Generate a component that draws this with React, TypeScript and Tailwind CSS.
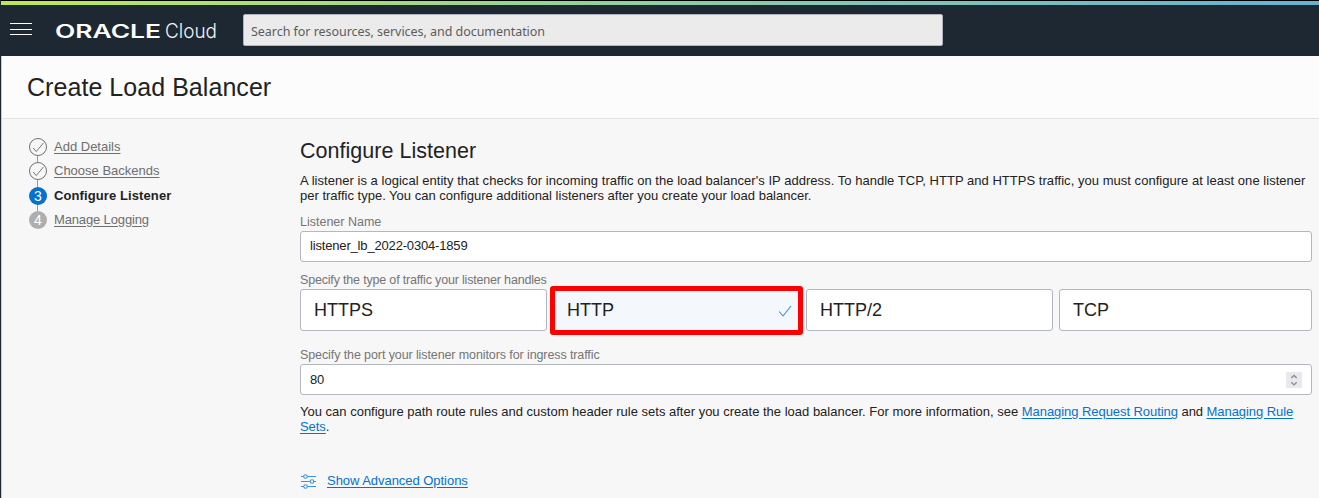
import React from "react";

function DoneMark() {
  return (
    <svg className="block h-[18px] w-[18px]" viewBox="0 0 18 18" fill="none">
      <circle cx="9" cy="9" r="8.5" stroke="#707070" />
      <path d="M4.2 10 L7.2 13.6 L14.6 4.8" stroke="#777" strokeWidth="1" />
    </svg>
  );
}

function Step({ label, n, state, track = "" }: { label: string; n: number; state: "done" | "current" | "next"; track?: string }) {
  return (
    <li className="flex h-[18px] items-center gap-[7px]">
      {state === "done" && <DoneMark />}
      {state === "current" && (
        <span className="flex h-[18px] w-[18px] items-center justify-center rounded-full bg-[#0572ce] pb-px text-[14px] leading-none text-white">{n}</span>
      )}
      {state === "next" && (
        <span className="flex h-[18px] w-[18px] items-center justify-center rounded-full bg-[#aeaeae] pb-px text-[14px] leading-none text-white">{n}</span>
      )}
      <span className={`pb-[2px] ${track}`}>
        {state === "current" ? (
          <span className="font-bold text-[#222]">{label}</span>
        ) : (
          <a className="text-[#6e6e6e] underline underline-offset-2">{label}</a>
        )}
      </span>
    </li>
  );
}

function Connector({ h }: { h: "a" | "b" }) {
  return <li className={h === "a" ? "ml-[8px] h-[6px] w-px bg-[#999]" : "ml-[8px] h-[7px] w-px bg-[#999]"} />;
}

function Label({ children, track = "" }: { children: React.ReactNode; track?: string }) {
  return <div className={`h-[15px] text-[12.5px] leading-[17px] text-[#757575] ${track}`}>{children}</div>;
}

function Tile({ label }: { label: string }) {
  return (
    <div className="h-[42px] flex-1 rounded-[3px] border border-[#b3b7c0] bg-white pl-[13px] text-[18px] leading-[40px]">{label}</div>
  );
}

function Link({ children }: { children: React.ReactNode }) {
  return <a className="text-[#0572ce] underline underline-offset-2">{children}</a>;
}

export default function App() {
  return (
    <div className="flex h-[498px] w-[1319px] overflow-hidden bg-[#f7f7f7] font-['Liberation_Sans',Arial,sans-serif] text-[13px] leading-[15px] text-[#222]">
      <div className="w-px shrink-0 bg-[#1e2833]" />
      <div className="flex flex-1 flex-col">
        <div className="h-px bg-black" />
        <div className="h-[4px] bg-linear-to-r from-[#bbe856] to-[#68b0d2]" />
        <header className="flex h-[51px] bg-[#1e2833]">
          <div className="ml-[9px] mt-[18px] flex h-[12px] w-[22px] flex-col justify-between">
            <span className="h-px bg-white" />
            <span className="h-px bg-white" />
            <span className="h-px bg-white" />
          </div>
          <svg className="ml-[23px] mt-[9px] h-[34px] w-[170px]" viewBox="0 -6 170 34">
            <text x="0" y="17.5" fill="#fff" fontFamily="Inter, sans-serif" fontWeight="600" fontSize="18" textLength="106" lengthAdjust="spacingAndGlyphs">ORACLE</text>
            <text x="110" y="17.7" fill="#f4f4f4" fontFamily="Inter, sans-serif" fontWeight="300" fontSize="19.5" textLength="52" lengthAdjust="spacingAndGlyphs">Cloud</text>
          </svg>
          <div className="ml-[18px] mt-[9px] h-[32px] w-[700px] rounded-[2px] border border-[#aeb3be] bg-[#ebebeb] pl-[7px] font-['Noto_Sans',sans-serif] text-[12.5px] leading-[33px] tracking-[-0.04px] text-[#5c5c5c]">
            Search for resources, services, and documentation
          </div>
        </header>
        <div className="flex flex-1 flex-col border-l border-[#c9cbcd]">
          <div className="h-[63px] border-b border-[#e3e3e3] bg-[#fcfcfc] pl-[25px]">
            <h1 className="text-[25px] leading-[63px] tracking-[0.05px]">Create Load Balancer</h1>
          </div>
          <div className="flex flex-1">
            <ol className="mt-[19px] flex w-[298px] shrink-0 flex-col pl-[27px]">
              <Step n={1} label="Add Details" state="done" />
              <Connector h="a" />
              <Step n={2} label="Choose Backends" state="done" />
              <Connector h="b" />
              <Step n={3} label="Configure Listener" state="current" track="tracking-[0.1px]" />
              <Connector h="a" />
              <Step n={4} label="Manage Logging" state="next" track="tracking-[-0.14px]" />
            </ol>
            <main className="flex w-[1012px] flex-col pt-[19px]">
              <h2 className="h-[35px] text-[21.5px] leading-[26px] tracking-[0.03px]">Configure Listener</h2>
              <p className="mr-[-4px] h-[41px]">
                <span className="tracking-[0.034px]">
                  A listener is a logical entity that checks for incoming traffic on the load balancer's IP address. To handle TCP, HTTP and HTTPS traffic, you must configure at least one listener
                </span>
                <br />
                per traffic type. You can configure additional listeners after you create your load balancer.
              </p>
              <Label>Listener Name</Label>
              <div className="mt-[2px] h-[31px] rounded-[3px] border border-[#b3b7c0] bg-white pl-[9px] text-[13px] leading-[27px] tracking-[-0.17px]">listener_lb_2022-0304-1859</div>
              <div className="h-[10px]" />
              <Label track="tracking-[-0.18px]">Specify the type of traffic your listener handles</Label>
              <div className="mt-[2px] flex h-[42px]">
                <div className="flex w-[247px]">
                  <Tile label="HTTPS" />
                </div>
                <div className="ml-[3px] mt-[-3px] flex h-[49px] w-[253px] items-center justify-between rounded-[3px] border-[5px] border-[#fe0000] bg-[#f4f8fd] pl-[12px] pr-[6px] text-[18px]">
                  <span>HTTP</span>
                  <svg className="mt-[1px] h-[14px] w-[14px]" viewBox="0 0 14 14" fill="none">
                    <path d="M1.2 7.5 L5 12 L13 2" stroke="#3b8ed6" strokeWidth="1.1" />
                  </svg>
                </div>
                <div className="ml-[3px] flex w-[247px]">
                  <Tile label="HTTP/2" />
                </div>
                <div className="ml-[6px] flex w-[253px]">
                  <Tile label="TCP" />
                </div>
              </div>
              <div className="h-[16px]" />
              <Label track="tracking-[-0.1px]">Specify the port your listener monitors for ingress traffic</Label>
              <div className="mt-[2px] flex h-[31px] items-center justify-between rounded-[3px] border border-[#b3b7c0] bg-white pl-[9px] pr-[9px] text-[13px] tracking-[-0.17px]">
                <span>80</span>
                <svg className="h-[16px] w-[16px]" viewBox="0 0 16 16" fill="none">
                  <rect width="16" height="16" fill="#e9e9ed" />
                  <path d="M5.3 6 L8 3.4 L10.7 6 M5.3 10.3 L8 12.9 L10.7 10.3" stroke="#8b8b96" strokeWidth="1.4" />
                </svg>
              </div>
              <p className="mt-[9px] h-[30px] tracking-[-0.06px]">
                <span className="tracking-[0.003px]">You can configure path route rules and custom header rule sets after you create the load balancer. For more information, see </span>
                <Link>Managing Request Routing</Link> and{" "}
                <Link>
                  Managing Rule
                  <br />
                  Sets
                </Link>
                .
              </p>
              <div className="mt-[38px] flex h-[17px] items-center tracking-[-0.04px]">
                <svg className="ml-[1px] mr-[10px] mt-[2px] h-[17px] w-[16px]" viewBox="0 0 16 17" fill="none" stroke="#3f93d8" strokeWidth="1.1">
                  <path d="M0 3.5H2.5M6.5 3.5H15M0 8.5H9M13 8.5H15M0 13.5H2.5M6.5 13.5H15" />
                  <circle cx="4.5" cy="3.5" r="1.8" />
                  <circle cx="11" cy="8.5" r="1.8" />
                  <circle cx="4.5" cy="13.5" r="1.8" />
                </svg>
                <Link>Show Advanced Options</Link>
              </div>
            </main>
          </div>
        </div>
      </div>
    </div>
  );
}
